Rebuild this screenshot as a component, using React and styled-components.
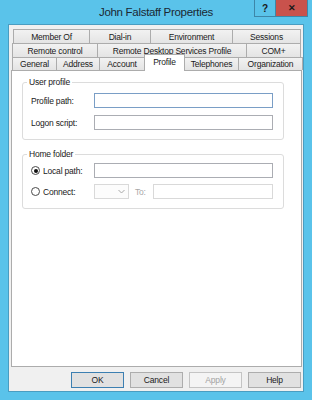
import React from "react";
import styled, { createGlobalStyle } from "styled-components";

const GlobalStyle = createGlobalStyle`
  html, body { margin:0; padding:0; }
  body { font-family:"Liberation Sans", Arial, sans-serif; background:#5ac3ea; }
  *, *::before, *::after { box-sizing:border-box; }
`;

const Window = styled.div`
  width:312px;
  height:400px;
  background:#5ac3ea;
  display:flex;
  flex-direction:column;
  font-size:8.5px;
  letter-spacing:-0.2px;
  color:#1a1a1a;
`;

const TitleBar = styled.div`
  height:24px;
  flex-shrink:0;
  display:grid;
  grid-template-columns:1fr auto 1fr;
`;

const Title = styled.div`
  grid-column:2;
  font-size:11.5px;
  letter-spacing:-0.3px;
  line-height:24px;
  color:#1b2833;
`;

const Controls = styled.div`
  grid-column:3;
  justify-self:end;
  align-self:start;
  margin-right:4px;
  height:17px;
  display:flex;
  border:1px solid #3d86a8;
  border-top:none;
`;

const CtrlButton = styled.div`
  width:${p => p.$w}px;
  display:flex;
  align-items:center;
  justify-content:center;
  background:${p => p.$bg};
  font-weight:bold;
  font-size:${p => p.$fs}px;
  color:#1a1a1a;
  & + & { border-left:1px solid #3d86a8; }
`;

const Body = styled.div`
  flex:1;
  margin:0 8px 8px;
  background:#f0f0f0;
  border:1px solid #4a9dc1;
  padding:4px 0 0 2px;
  display:flex;
  flex-direction:column;
`;

const TabRow = styled.div`
  display:flex;
  align-items:flex-end;
  height:${p => p.$h}px;
  margin-left:${p => p.$indent}px;
`;

const Tab = styled.div`
  width:${p => p.$w}px;
  height:${p => (p.$active ? 17 : p.$h)}px;
  margin-bottom:${p => (p.$active ? -1 : 0)}px;
  position:${p => (p.$active ? "relative" : "static")};
  z-index:${p => (p.$active ? 2 : "auto")};
  display:flex;
  align-items:${p => (p.$active ? "flex-start" : "center")};
  padding-top:${p => (p.$active ? 2 : 0)}px;
  justify-content:center;
  border:1px solid #acacac;
  border-bottom:none;
  background:${p => (p.$active ? "#fff" : "linear-gradient(#f2f2f2, #e4e4e4)")};
  white-space:nowrap;
  & + & { margin-left:-1px; }
`;

const Panel = styled.div`
  height:297px;
  margin-right:1px;
  background:#fff;
  border:1px solid #acacac;
  padding:6px 17px 0 10px;
  display:flex;
  flex-direction:column;
  gap:9px;
`;

const Group = styled.fieldset`
  margin:0;
  border:1px solid #dcdcdc;
  border-radius:3px;
  padding:${p => p.$pt}px 10px 9px 8px;
  display:grid;
  grid-template-columns:63px 1fr;
  row-gap:${p => p.$gap}px;
  align-items:center;
  min-width:0;
`;

const Legend = styled.legend`
  padding:0 2px;
  margin-left:-4px;
  line-height:10px;
`;

const Label = styled.div`
  display:flex;
  align-items:center;
  gap:3px;
  color:${p => (p.$disabled ? "#a0a0a0" : "#1a1a1a")};
`;

const Radio = styled.span`
  width:9px;
  height:9px;
  border-radius:50%;
  border:1px solid #4a4a4a;
  background:#fff;
  display:inline-flex;
  align-items:center;
  justify-content:center;
  &::after {
    content:"";
    width:4px;
    height:4px;
    border-radius:50%;
    background:${p => (p.$checked ? "#111" : "transparent")};
  }
`;

const Field = styled.div`
  height:15px;
  flex:${p => (p.$grow ? 1 : "none")};
  background:#fff;
  border:1px solid ${p => (p.$focus ? "#7a9ec6" : p.$disabled ? "#d9d9d9" : "#abadb3")};
`;

const FieldLine = styled.div`
  display:flex;
  align-items:center;
`;

const Combo = styled.div`
  width:35px;
  height:15px;
  border:1px solid #d9d9d9;
  background:#fcfcfc;
  display:flex;
  justify-content:flex-end;
  align-items:center;
  padding-right:3px;
`;

const ToLabel = styled.span`
  margin:0 7px 0 6px;
  color:#a8a8a8;
`;

const ButtonRow = styled.div`
  display:flex;
  justify-content:flex-end;
  gap:6px;
  margin-top:5px;
  padding-right:2px;
`;

const Button = styled.div`
  width:53px;
  height:16px;
  display:flex;
  align-items:center;
  justify-content:center;
  background:${p => (p.$disabled ? "#f4f4f4" : "#e1e1e1")};
  border:1px solid ${p => (p.$default ? "#3c7fb1" : p.$disabled ? "#c4c4c4" : "#adadad")};
  color:${p => (p.$disabled ? "#a3a3a3" : "#1a1a1a")};
`;

const tabRows = [
  { indent: 2, h: 14, tabs: [["Member Of", 77], ["Dial-in", 62], ["Environment", 83], ["Sessions", 69]] },
  { indent: 1, h: 14, tabs: [["Remote control", 86], ["Remote Desktop Services Profile", 150], ["COM+", 55]] },
  {
    indent: 1,
    h: 13,
    tabs: [["General", 45], ["Address", 44], ["Account", 46], ["Profile", 41], ["Telephones", 55], ["Organization", 65]],
  },
];

const Chevron = () => (
  <svg width="7" height="5" viewBox="0 0 7 5">
    <path d="M0.5 1 L3.5 4 L6.5 1" fill="none" stroke="#a8a8a8" strokeWidth="1" />
  </svg>
);

export default function App() {
  return (
    <Window>
      <GlobalStyle />
      <TitleBar>
        <Title>John Falstaff Properties</Title>
        <Controls>
          <CtrlButton $w={20} $bg="#5ac3ea" $fs={10}>?</CtrlButton>
          <CtrlButton $w={32} $bg="#c9524c" $fs={9}>✕</CtrlButton>
        </Controls>
      </TitleBar>
      <Body>
        {tabRows.map((row, i) => (
          <TabRow key={i} $indent={row.indent} $h={row.h}>
            {row.tabs.map(([name, w]) => (
              <Tab key={name} $w={w} $h={row.h} $active={name === "Profile"}>
                {name}
              </Tab>
            ))}
          </TabRow>
        ))}
        <Panel>
          <Group $pt={6} $gap={7}>
            <Legend>User profile</Legend>
            <Label>Profile path:</Label>
            <Field $focus />
            <Label>Logon script:</Label>
            <Field />
          </Group>
          <Group $pt={4} $gap={6}>
            <Legend>Home folder</Legend>
            <Label>
              <Radio $checked />
              Local path:
            </Label>
            <Field />
            <Label>
              <Radio />
              Connect:
            </Label>
            <FieldLine>
              <Combo>
                <Chevron />
              </Combo>
              <ToLabel>To:</ToLabel>
              <Field $grow $disabled />
            </FieldLine>
          </Group>
        </Panel>
        <ButtonRow>
          <Button $default>OK</Button>
          <Button>Cancel</Button>
          <Button $disabled>Apply</Button>
          <Button>Help</Button>
        </ButtonRow>
      </Body>
    </Window>
  );
}
